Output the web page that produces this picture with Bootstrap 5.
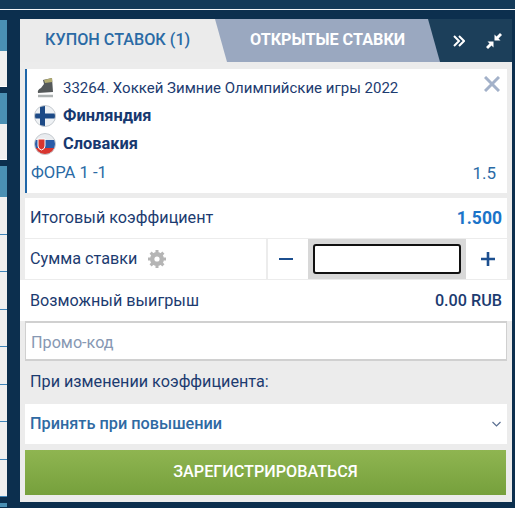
<!DOCTYPE html>
<html lang="ru">
<head>
    <meta charset="utf-8">
    <title>Купон ставок</title>
    <link href="https://cdn.jsdelivr.net/npm/bootstrap@5.3.2/dist/css/bootstrap.min.css" rel="stylesheet">
    <style>
        html, body { height: 100%; overflow: hidden; }
        body { font-family: Roboto, "Liberation Sans", sans-serif; font-size: 16.2px; color: #1c3b70; background: #0c2f4e; }
        .top-bar { height: 10px; background: #133a59; border-bottom: 1px solid #f4f6f8; }
        .left-strip { width: 7px; flex: none; }
        .strip-top { height: 10px; }
        .strip-head { height: 31px; background: #4a90b4; }
        .strip-tail { height: 4px; background: #4a90b4; }
        .strip-light { height: 36px; background: #f0f0f0; border-bottom: 1px solid #fff; }
        .strip-gap { height: 6px; }
        .strip-row { height: 37.5px; background: #f0f0f0; border-bottom: 1px solid #3f86bb; }
        .slip { width: 492px; margin: 9px 0 6px 13px; height: 483px; background: #ececec; }
        .slip-tabs { height: 43px; background: #1c3f5a; }
        .tab-coupon { width: 207px; padding-left: 25px; background: #ebebeb; color: #2a6aa5; font-size: 16.2px; font-weight: 500; }
        .tab-open { width: 225px; margin-left: -12px; padding-left: 35px; background: #9aa8c0; color: #fff; font-size: 16.2px; font-weight: 700; clip-path: polygon(0 0, 213px 0, 100% 100%, 12px 100%); }
        .tab-tools { padding-left: 13px; gap: 20px; }
        .slip-body { padding: 7px 5px 0; }
        .coupon-box { height: 124px; background: #fff; border-left: 2px solid #1f66a8; padding: 5px 11px 0 6px; }
        .coupon-line { height: 28px; font-size: 15px; }
        .coupon-ico { width: 24px; height: 24px; margin-right: 6px; flex: none; }
        .team-name { font-size: 16.4px; font-weight: 700; color: #17386f; }
        .market-line { color: #2a6aa5; font-size: 16.6px; margin-top: 3px; margin-left: -2px; }
        .market-odds { font-size: 17px; }
        .close-x { position: absolute; top: 7px; right: 7px; }
        .total-row { height: 40px; margin-top: 5px; background: #fff; padding: 0 5px; }
        .odds-val { color: #1b74c9; font-weight: 700; font-size: 17.5px; }
        .stake-row { height: 40px; background: #fff; margin-top: 1px; }
        .stake-label { width: 241px; padding-left: 5px; gap: 11px; }
        .stake-btn { width: 42px; height: 40px; border-left: 2px solid #ececec; }
        .stake-btn-plus { width: 41px; border-left: 0; padding-left: 2px; }
        .stake-wrap { width: 158px; height: 40px; padding: 5px; background: #d8d8d8; }
        .stake-input { display: block; width: 100%; height: 100%; background: #fff; border: 2px solid #111; border-radius: 3px; padding: 0 6px; outline: 0; }
        .win-row { height: 41px; margin: 1px -5px 0; padding: 2px 10px 0; background: #fff; }
        .win-val { font-weight: 500; color: #1c3b70; }
        .promo-input { display: block; width: 100%; height: 40px; padding: 2px 5px 0; font-size: 16.2px; color: #1c3b70; background: #fff; border: 1px solid #d0d0d0; border-width: 2px 1px; outline: 0; }
        .promo-input::placeholder { color: #8798b3; }
        .odds-note { height: 43px; padding-left: 5px; }
        .accept-row { height: 40px; background: #fff; padding: 0 6px 0 5px; font-size: 16.3px; font-weight: 500; color: #2f6aa3; }
        .reg-btn { display: block; width: 481px; height: 45px; margin-top: 6px; border: 0; color: #fff; font-size: 16.2px; font-weight: 500; background: linear-gradient(#8fb551, #76a03c); }
    </style>
</head>
<body>
    <div class="top-bar"></div>
    <div class="d-flex">
        <div class="left-strip">
            <div class="strip-top"></div>
            <div class="strip-head"></div><div class="strip-light"></div><div class="strip-gap"></div>
            <div class="strip-head"></div><div class="strip-light"></div><div class="strip-gap"></div>
            <div class="strip-head"></div>
            <div class="strip-row"></div><div class="strip-row"></div><div class="strip-row"></div><div class="strip-row"></div>
            <div class="strip-row"></div><div class="strip-row"></div><div class="strip-row"></div><div class="strip-row"></div>
            <div class="strip-gap"></div><div class="strip-tail"></div>
        </div>
        <div class="slip">
            <div class="slip-tabs d-flex">
                <div class="tab-coupon d-flex align-items-center">КУПОН СТАВОК (1)</div>
                <div class="tab-open d-flex align-items-center">ОТКРЫТЫЕ СТАВКИ</div>
                <div class="tab-tools d-flex align-items-center">
                    <svg width="12" height="14" viewBox="0 0 12 14" fill="none" stroke="#fff" stroke-width="2"><path d="M1 2l5 5-5 5M6 2l5 5-5 5"/></svg>
                    <svg width="18" height="18" viewBox="0 0 18 18" fill="#fff"><path d="M9.500 8.500v-6l2 2L15 1l2 2-3.500 3.500 2 2zM8.500 9.500v6l-2-2L3 17l-2-2 3.500-3.500-2-2z"/></svg>
                </div>
            </div>
            <div class="slip-body">
                <div class="coupon-box position-relative">
                    <div class="coupon-line d-flex align-items-center">
                        <svg class="coupon-ico" viewBox="0 0 24 24"><path d="M10 4l9-2 1 14-15 1q-1-3 3-5l3-4z" fill="#55595a"/><path d="M11 4l8-2 .3 4-7.300 1z" fill="#b3ad72"/><path d="M5 20h15" stroke="#aeb3b3" stroke-width="2.500"/></svg>
                        <span>33264. Хоккей Зимние Олимпийские игры 2022</span>
                    </div>
                    <div class="coupon-line d-flex align-items-center">
                        <svg class="coupon-ico" viewBox="0 0 24 24"><defs><clipPath id="ballClip"><circle cx="12" cy="12" r="10.500"/></clipPath></defs><g clip-path="url(#ballClip)"><rect width="24" height="24" fill="#eef1f4"/><rect x="7" width="5" height="24" fill="#1d4a86"/><rect y="9.500" width="24" height="5" fill="#1d4a86"/></g><circle cx="12" cy="12" r="10.500" fill="none" stroke="#c6cbd0"/></svg>
                        <span class="team-name">Финляндия</span>
                    </div>
                    <div class="coupon-line d-flex align-items-center">
                        <svg class="coupon-ico" viewBox="0 0 24 24"><g clip-path="url(#ballClip)"><rect width="24" height="8" fill="#e9ecef"/><rect y="8" width="24" height="8" fill="#2a5ca8"/><rect y="16" width="24" height="8" fill="#d8352f"/><path d="M5 7h7v7q0 3-3.500 4Q5 17 5 14z" fill="#d8352f" stroke="#fff"/></g><circle cx="12" cy="12" r="10.500" fill="none" stroke="#c6cbd0"/></svg>
                        <span class="team-name">Словакия</span>
                    </div>
                    <div class="market-line d-flex justify-content-between"><span>ФОРА 1 -1</span><span class="market-odds">1.5</span></div>
                    <svg class="close-x" width="16" height="16" viewBox="0 0 16 16" stroke="#a3b1c9" stroke-width="3"><path d="M1 1l14 14M15 1L1 15"/></svg>
                </div>
                <div class="total-row d-flex justify-content-between align-items-center">
                    <span>Итоговый коэффициент</span><span class="odds-val">1.500</span>
                </div>
                <div class="stake-row d-flex align-items-center">
                    <div class="stake-label d-flex align-items-center">
                        <span>Сумма ставки</span>
                        <svg width="18" height="18" viewBox="0 0 18 18"><circle cx="9" cy="9" r="5.200" fill="none" stroke="#b5b5b5" stroke-width="3.600"/><path d="M9 0v18M0 9h18M2.600 2.600l12.800 12.800M15.400 2.600L2.600 15.400" stroke="#b5b5b5" stroke-width="3"/><circle cx="9" cy="9" r="2.600" fill="#fff"/></svg>
                    </div>
                    <div class="stake-btn pe-1 d-flex align-items-center justify-content-center"><svg width="14" height="14" viewBox="0 0 14 14"><path d="M0 7h14" stroke="#1c4f8f" stroke-width="2"/></svg></div>
                    <div class="stake-wrap"><input class="stake-input" type="text"></div>
                    <div class="stake-btn stake-btn-plus d-flex align-items-center justify-content-center"><svg width="14" height="14" viewBox="0 0 14 14"><path d="M0 7h14M7 0v14" stroke="#1c4f8f" stroke-width="2.600"/></svg></div>
                </div>
                <div class="win-row d-flex justify-content-between align-items-center">
                    <span>Возможный выигрыш</span><span class="win-val">0.00 RUB</span>
                </div>
                <input class="promo-input" type="text" placeholder="Промо-код">
                <div class="odds-note d-flex align-items-center">При изменении коэффициента:</div>
                <div class="accept-row d-flex justify-content-between align-items-center">
                    <span>Принять при повышении</span>
                    <svg width="9" height="6" viewBox="0 0 9 6" fill="none" stroke="#5a6f92" stroke-width="1.200"><path d="M.5 1l4 4 4-4"/></svg>
                </div>
                <button class="reg-btn" type="button">ЗАРЕГИСТРИРОВАТЬСЯ</button>
            </div>
        </div>
    </div>
    <script src="https://cdn.jsdelivr.net/npm/bootstrap@5.3.2/dist/js/bootstrap.bundle.min.js"></script>
</body>
</html>
